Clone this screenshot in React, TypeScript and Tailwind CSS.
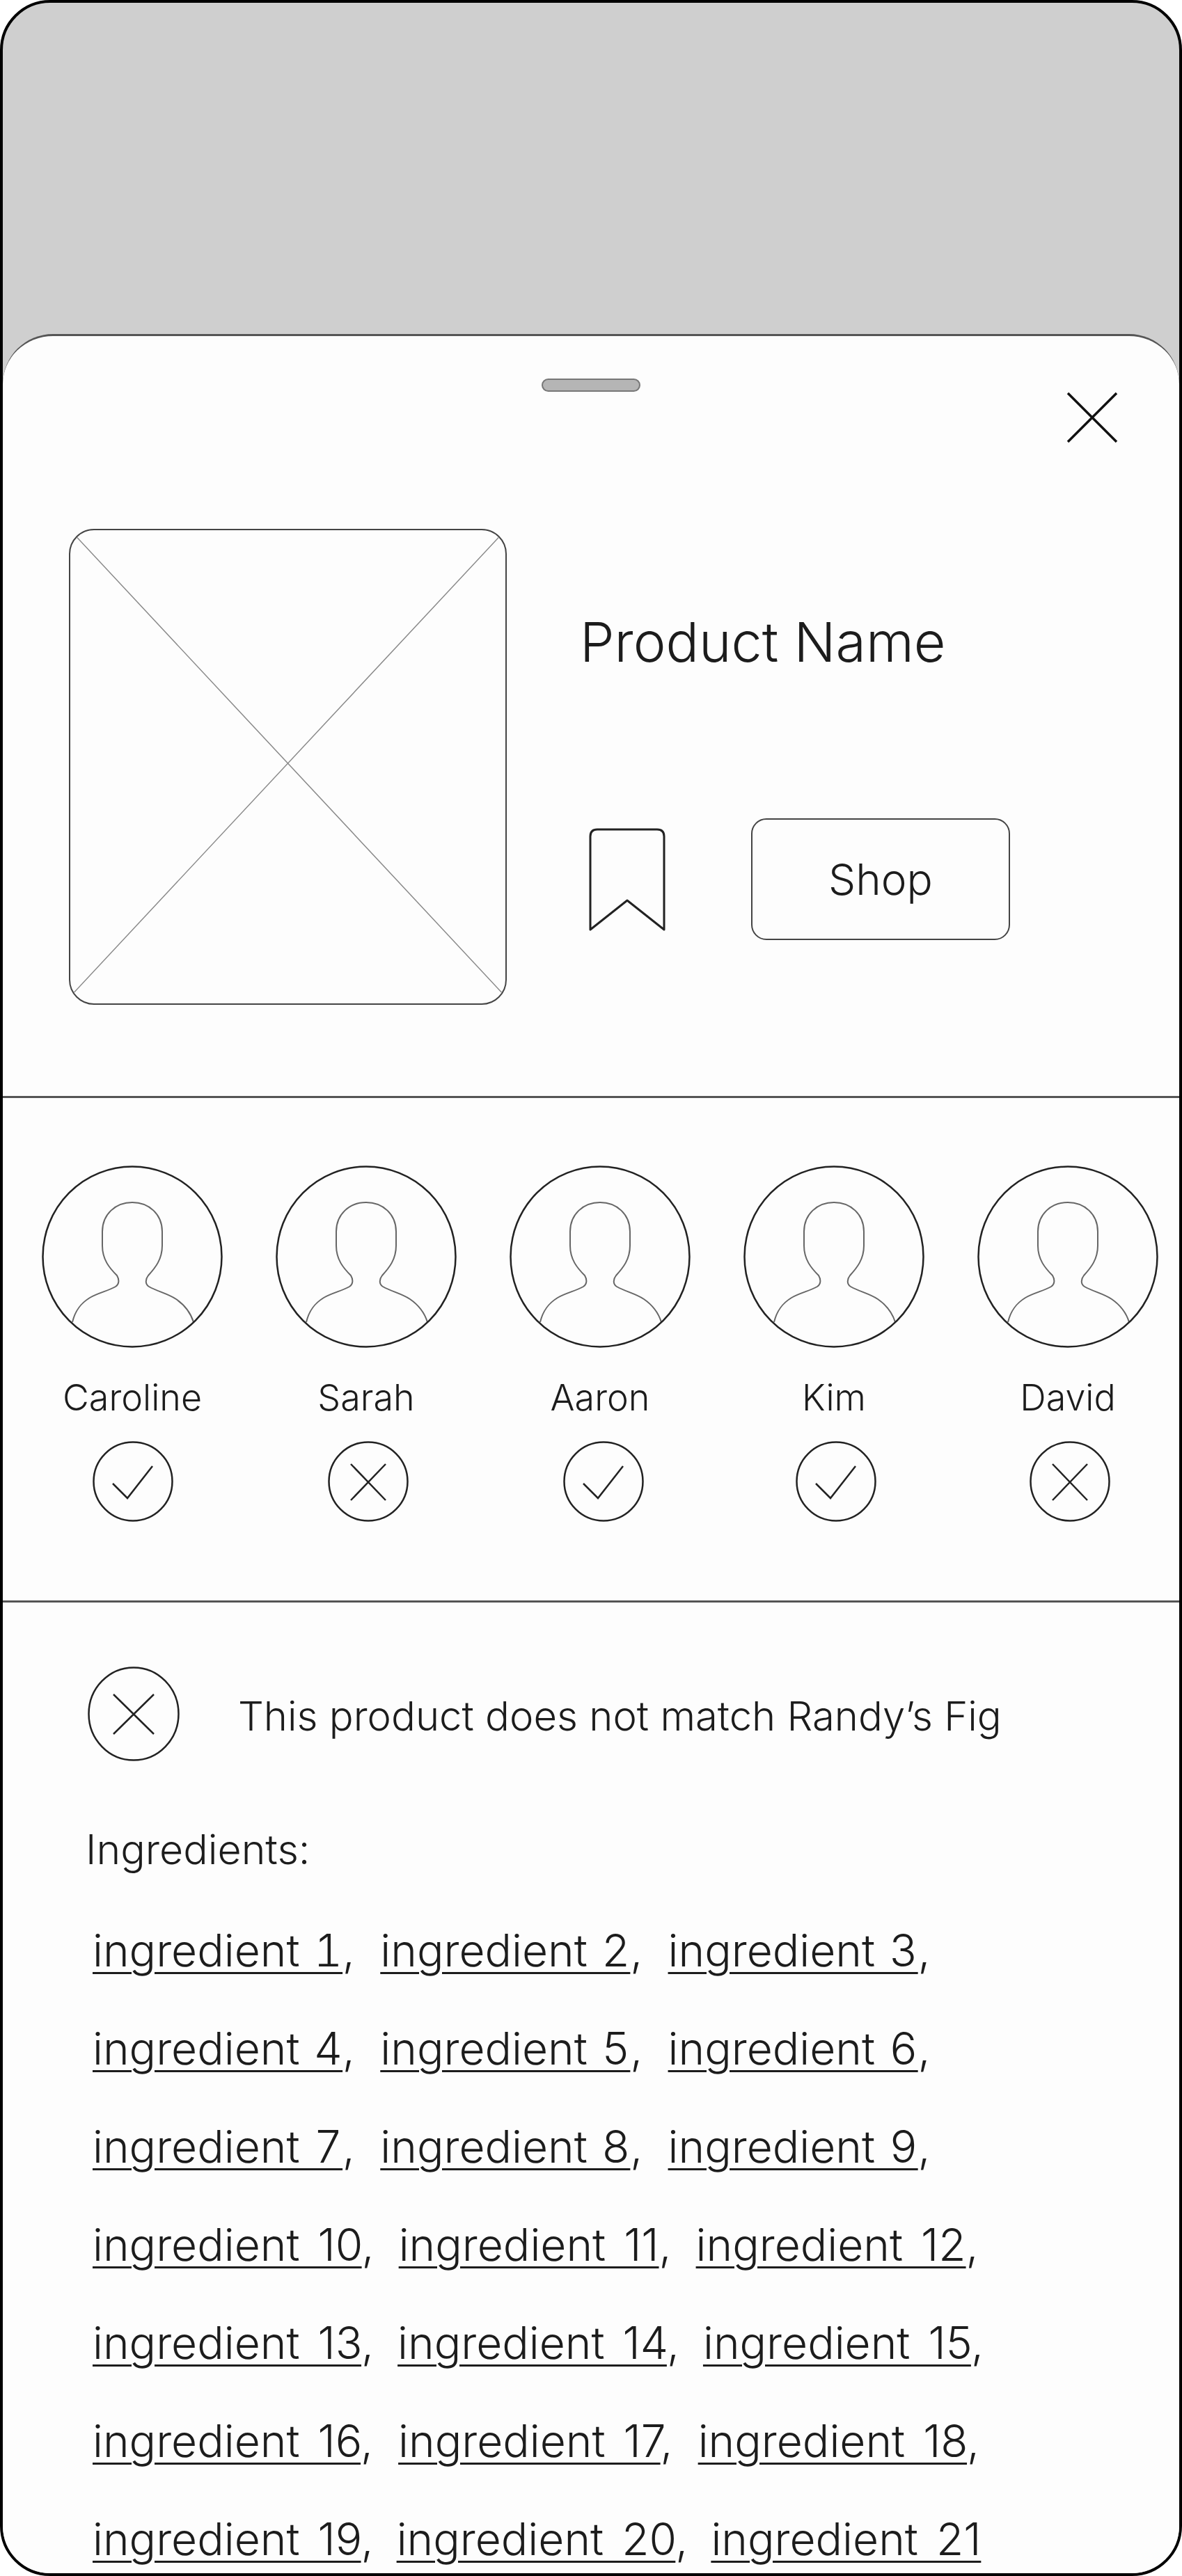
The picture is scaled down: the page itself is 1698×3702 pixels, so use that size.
const people = [
  { name: "Caroline", ok: true, shift: "ml-[1px]" },
  { name: "Sarah", ok: false, shift: "ml-[5px]" },
  { name: "Aaron", ok: true, shift: "ml-[10px]" },
  { name: "Kim", ok: true, shift: "ml-[6px]" },
  { name: "David", ok: false, shift: "ml-[5px]" },
];

const ingredientRows = [
  { style: "gap-x-[37px] tabular-nums [word-spacing:3px]", items: ["ingredient 1,", "ingredient 2,", "ingredient 3,"] },
  { style: "gap-x-[37px] tabular-nums [word-spacing:3px]", items: ["ingredient 4,", "ingredient 5,", "ingredient 6,"] },
  { style: "gap-x-[37px] tabular-nums [word-spacing:3px]", items: ["ingredient 7,", "ingredient 8,", "ingredient 9,"] },
  { style: "gap-x-[35px] [word-spacing:8px]", items: ["ingredient 10,", "ingredient 11,", "ingredient 12,"] },
  { style: "gap-x-[34px] [word-spacing:8px]", items: ["ingredient 13,", "ingredient 14,", "ingredient 15,"] },
  { style: "gap-x-[36px] [word-spacing:8px]", items: ["ingredient 16,", "ingredient 17,", "ingredient 18,"] },
  { style: "gap-x-[33px] [word-spacing:8px]", items: ["ingredient 19,", "ingredient 20,", "ingredient 21"] },
];

function Avatar() {
  return (
    <svg width="260" height="262" viewBox="0 0 260 262" fill="none" className="block">
      <path
        d="M44 225C48 208 56 198 69 190C81 183 96 180 106 174C112 170 111 163 108 158C97 147 87 135 87 115L87 95C87 70 106 53 130 53C154 53 173 70 173 95L173 115C173 135 163 147 153 158C149 163 148 170 154 174C166 181 181 184 193 192C206 201 214 212 218 225"
        stroke="#666"
        strokeWidth="2"
      />
      <ellipse cx="130" cy="131" rx="128.5" ry="129.5" stroke="#222" strokeWidth="2.5" />
    </svg>
  );
}

function StatusIcon({ ok }: { ok: boolean }) {
  return (
    <svg width="116" height="116" viewBox="0 0 116 116" fill="none" className="block">
      <circle cx="58" cy="58" r="56.5" stroke="#222" strokeWidth="2.5" />
      {ok ? (
        <path d="M29 61L50 82L86 36" stroke="#222" strokeWidth="2.5" />
      ) : (
        <path d="M33 33L83 85M83 33L33 85" stroke="#222" strokeWidth="2.5" />
      )}
    </svg>
  );
}

export default function App() {
  return (
    <div className="w-[1698px] h-[3702px] bg-white font-['Inter',sans-serif] font-light text-[#1c1c1c]">
      <div className="w-full h-full flex flex-col overflow-hidden rounded-[72px] border-[4px] border-black bg-[#cfcfcf]">
        <div className="mt-[476px] flex-1 flex flex-col rounded-t-[72px] border-t-[3px] border-[#555] bg-[#fdfdfd]">
          <div className="mt-[61px] w-[142px] h-[19px] self-center rounded-full border-2 border-[#777] bg-[#b5b5b5]" />

          <div className="flex justify-end pr-[88px]">
            <svg width="74" height="74" viewBox="0 0 74 74" fill="none" className="block">
              <path d="M2 2L72 72M72 2L2 72" stroke="#111" strokeWidth="3.5" />
            </svg>
          </div>

          <section className="mt-[123px] h-[818px] flex items-start pl-[95px] border-b-[3px] border-[#555]">
            <div className="w-[629px] h-[684px] rounded-[36px] border-2 border-[#444] overflow-hidden">
              <svg width="100%" height="100%" viewBox="0 0 625 680" preserveAspectRatio="none" fill="none" className="block">
                <path d="M0 0L625 670M625 0L0 670" stroke="#8a8a8a" strokeWidth="1.5" />
              </svg>
            </div>
            <div className="ml-[105px] flex flex-col">
              <h1 className="mt-[113px] text-[79px] leading-[98px] font-light">Product Name</h1>
              <div className="mt-[205px] flex items-center pl-[13px]">
                <svg width="110" height="148" viewBox="0 0 110 148" fill="none" className="block">
                  <path d="M2 146V12Q2 2 12 2H98Q108 2 108 12V146L55 104Z" stroke="#222" strokeWidth="3" strokeLinejoin="round" />
                </svg>
                <button className="ml-[123px] w-[372px] h-[175px] rounded-[22px] border-2 border-[#444] text-[62px] font-light">Shop</button>
              </div>
            </div>
          </section>

          <section className="h-[725px] border-b-[3px] border-[#555] flex pl-[18px] pt-[97px]">
            {people.map((p) => (
              <div key={p.name} className="w-[336px] shrink-0 flex flex-col items-center">
                <Avatar />
                <div className="mt-[37px] text-[52px] leading-[70px]">{p.name}</div>
                <div className={`mt-[27px] ${p.shift}`}>
                  <StatusIcon ok={p.ok} />
                </div>
              </div>
            ))}
          </section>

          <section className="pl-[122px] pt-[92px]">
            <div className="flex items-center">
              <svg width="132" height="136" viewBox="0 0 132 136" fill="none" className="block">
                <ellipse cx="66" cy="68" rx="64.5" ry="66.5" stroke="#222" strokeWidth="2.5" />
                <path d="M37 40L95 97M95 40L37 97" stroke="#222" strokeWidth="2.5" />
              </svg>
              <p className="ml-[84px] mt-[6px] text-[58px] leading-[80px]">This product does not match Randy’s Fig</p>
            </div>
            <p className="mt-[87px] -ml-[3px] text-[59px] leading-[80px]">Ingredients:</p>
            <div className="mt-[64px] pl-[7px] flex flex-col gap-y-[60px]">
              {ingredientRows.map((row, i) => (
                <div key={i} className={`flex ${row.style} text-[64px] leading-[81px]`}>
                  {row.items.map((item) => {
                    const hasComma = item.endsWith(",");
                    return (
                      <span key={item}>
                        <span className="underline decoration-[3px] underline-offset-[8px]">{hasComma ? item.slice(0, -1) : item}</span>
                        {hasComma ? "," : ""}
                      </span>
                    );
                  })}
                </div>
              ))}
            </div>
          </section>
        </div>
      </div>
    </div>
  );
}
